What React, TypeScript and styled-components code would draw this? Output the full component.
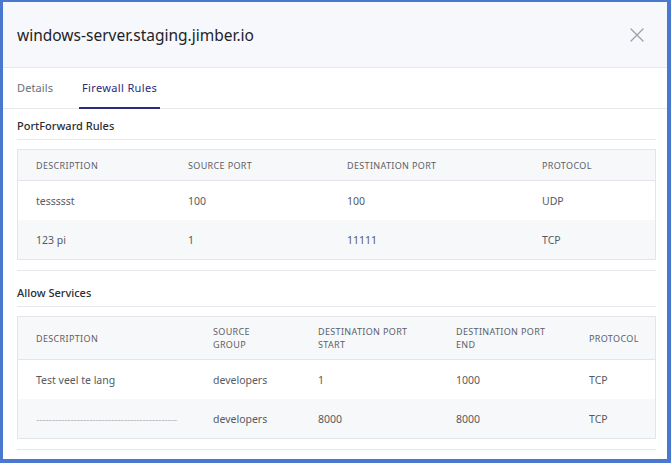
import React from 'react';
import styled, { createGlobalStyle } from 'styled-components';

const GlobalStyle = createGlobalStyle`
  html, body {
    margin: 0;
    padding: 0;
    background: #ffffff;
  }
  body {
    font-family: 'Noto Sans', 'DejaVu Sans', sans-serif;
  }
`;

const portForwardCols = ['Description', 'Source Port', 'Destination Port', 'Protocol'];
const portForwardRows = [
  ['tessssst', '100', '100', 'UDP'],
  ['123 pi', '1', '11111', 'TCP'],
];

const allowCols = ['Description', 'Source Group', 'Destination Port Start', 'Destination Port End', 'Protocol'];
const allowRows = [
  ['Test veel te lang', 'developers', '1', '1000', 'TCP'],
  ['-'.repeat(45), 'developers', '8000', '8000', 'TCP'],
];

const CloseIcon = () => (
  <svg width="14" height="14" viewBox="0 0 14 14" fill="none">
    <path d="M1 1L13 13M13 1L1 13" stroke="#9aa0a8" strokeWidth="1.3" strokeLinecap="round" />
  </svg>
);

const App: React.FC = () => {
  return (
    <>
      <GlobalStyle />
      <Frame>
        <Header>
          <Title>windows-server.staging.jimber.io</Title>
          <CloseButton aria-label="close">
            <CloseIcon />
          </CloseButton>
        </Header>
        <Tabs>
          <Tab>Details</Tab>
          <Tab active>Firewall Rules</Tab>
        </Tabs>
        <Content>
          <Section>
            <SectionTitle>PortForward Rules</SectionTitle>
            <Table>
              <HeadRow cols="152px 159px 195px 1fr" tall={false}>
                {portForwardCols.map((c) => (
                  <HeadCell key={c}>{c}</HeadCell>
                ))}
              </HeadRow>
              {portForwardRows.map((row, i) => (
                <Row key={i} cols="152px 159px 195px 1fr" striped={i % 2 === 1}>
                  {row.map((v, j) => (
                    <Cell key={j}>{v}</Cell>
                  ))}
                </Row>
              ))}
            </Table>
          </Section>
          <Section spaced>
            <SectionTitle>Allow Services</SectionTitle>
            <Table>
              <HeadRow cols="177px 105px 138px 133px 1fr" tall>
                {allowCols.map((c) => (
                  <HeadCell key={c}>{c}</HeadCell>
                ))}
              </HeadRow>
              {allowRows.map((row, i) => (
                <Row key={i} cols="177px 105px 138px 133px 1fr" striped={i % 2 === 1}>
                  {row.map((v, j) => (
                    <Cell key={j} muted={v.startsWith('---')}>{v}</Cell>
                  ))}
                </Row>
              ))}
            </Table>
          </Section>
        </Content>
      </Frame>
    </>
  );
};

export default App;

const Frame = styled.div`
  box-sizing: border-box;
  width: 671px;
  height: 463px;
  border-style: solid;
  border-color: #4a78cf;
  border-width: 2px 4px 4px 3px;
  background: #ffffff;
  overflow: hidden;
  display: flex;
  flex-direction: column;
`;

const Header = styled.div`
  height: 65px;
  flex-shrink: 0;
  background: #f7f8fb;
  border-bottom: 1px solid #e6e8ec;
  display: flex;
  align-items: center;
  justify-content: space-between;
  padding: 0 23px 0 14px;
`;

const Title = styled.h1`
  margin: 0;
  font-size: 15.5px;
  font-weight: 400;
  color: #1f2329;
`;

const CloseButton = styled.button`
  background: none;
  border: none;
  padding: 0;
  display: flex;
  cursor: pointer;
`;

const Tabs = styled.div`
  height: 40px;
  flex-shrink: 0;
  display: flex;
  align-items: stretch;
  gap: 26px;
  padding: 0 0 0 14px;
  border-bottom: 1px solid #e6e8ec;
`;

const Tab = styled.div<{ active?: boolean }>`
  display: flex;
  align-items: center;
  padding: 0 ${(p) => (p.active ? '3px' : '0')};
  margin-bottom: -1px;
  font-size: 11px;
  letter-spacing: ${(p) => (p.active ? '0.35px' : '0.1px')};
  color: ${(p) => (p.active ? '#2b2a7d' : '#6a6f78')};
  border-bottom: 2px solid ${(p) => (p.active ? '#2b2a7d' : 'transparent')};
`;

const Content = styled.div`
  padding: 0 11px 0 14px;
`;

const Section = styled.section<{ spaced?: boolean }>`
  margin-top: ${(p) => (p.spaced ? '5px' : '0')};
  padding-bottom: 10px;
  border-bottom: 1px solid #e6e8ec;
`;

const SectionTitle = styled.div`
  font-size: 11px;
  font-weight: 500;
  color: #2a2e34;
  padding: 9px 0 6px;
  border-bottom: 1px solid #e6e8ec;
  margin-bottom: 9px;
`;

const Table = styled.div`
  border: 1px solid #e3e5e9;
`;

const HeadRow = styled.div<{ cols: string; tall: boolean }>`
  display: grid;
  grid-template-columns: ${(p) => p.cols};
  align-items: center;
  height: ${(p) => (p.tall ? '42px' : '30px')};
  padding-left: 18px;
  background: #f7f8fa;
  border-bottom: 1px solid #e3e5e9;
`;

const HeadCell = styled.div`
  font-size: 9px;
  line-height: 13px;
  text-transform: uppercase;
  letter-spacing: 0.35px;
  color: #5b6068;
  padding-right: 36px;
`;

const Row = styled.div<{ cols: string; striped: boolean }>`
  display: grid;
  grid-template-columns: ${(p) => p.cols};
  align-items: center;
  height: 39px;
  padding-left: 18px;
  background: ${(p) => (p.striped ? '#f7f8fa' : '#ffffff')};
`;

const Cell = styled.div<{ muted?: boolean }>`
  font-size: 10.5px;
  color: ${(p) => (p.muted ? '#b8bcc2' : '#555a62')};
  white-space: nowrap;
  overflow: hidden;
  letter-spacing: ${(p) => (p.muted ? '-0.25px' : '0')};
`;
